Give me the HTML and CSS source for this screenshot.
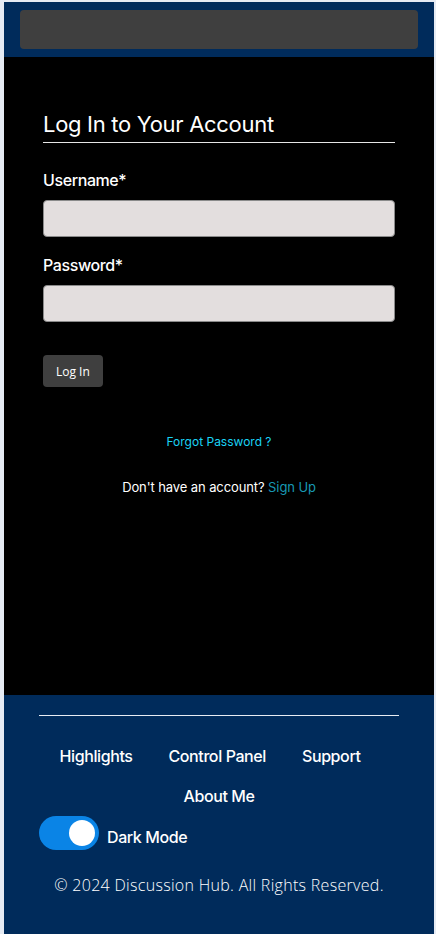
FILE: index.html
```html
<!DOCTYPE html>
<html lang="en">
<head>
<meta charset="utf-8">
<title>Log In - Discussion Hub</title>
<link rel="stylesheet" href="styles.css">
</head>
<body>
<div class="page">
  <header class="topbar">
    <div class="topbar-inner"></div>
  </header>
  <main class="main">
    <form class="login">
      <h1 class="login-title">Log In to Your Account</h1>
      <label class="field-label" for="username">Username*</label>
      <input class="field-input" id="username" type="text">
      <label class="field-label" for="password">Password*</label>
      <input class="field-input" id="password" type="password">
      <div class="actions">
        <button class="btn" type="button">Log In</button>
      </div>
      <p class="forgot"><a href="#">Forgot Password ?</a></p>
      <p class="signup">Don't have an account? <a href="#">Sign Up</a></p>
    </form>
  </main>
  <footer class="footer">
    <hr class="footer-rule">
    <nav class="footer-nav">
      <a href="#">Highlights</a>
      <a href="#">Control Panel</a>
      <a href="#">Support</a>
      <a href="#" class="nav-last">About Me</a>
    </nav>
    <div class="mode">
      <span class="switch"><span class="knob"></span></span>
      <span class="mode-label">Dark Mode</span>
    </div>
    <p class="copy">© 2024 Discussion Hub. All Rights Reserved.</p>
  </footer>
</div>
</body>
</html>
```
FILE: styles.css
```css
* { box-sizing: border-box; }
html, body { margin: 0; padding: 0; }
body {
  background: #e6ebf3;
  font-family: Inter, "Liberation Sans", sans-serif;
  color: #fff;
}
.page {
  margin: 2px 2px 0 4px;
  min-height: 932px;
  display: flex;
  flex-direction: column;
}
.topbar {
  background: #002b5b;
  padding: 8px 16px;
}
.topbar-inner {
  height: 39px;
  background: #3f3f3f;
  border-radius: 4px;
}
.main {
  background: #000;
  height: 638px;
  padding: 52px 39px 0;
}
.login { display: flex; flex-direction: column; }
.login-title {
  margin: 0 0 27px;
  font-size: 22px;
  font-weight: 400;
  letter-spacing: -0.3px;
  line-height: 30px;
  padding-bottom: 3px;
  border-bottom: 1px solid #e6e6e6;
}
.field-label {
  font-size: 16px;
  font-weight: 500;
  letter-spacing: -0.4px;
  line-height: 20px;
  margin-bottom: 10px;
}
.field-input {
  height: 37px;
  background: #e3dede;
  border: 1px solid #8a8a8a;
  border-radius: 4px;
  margin-bottom: 18px;
}
.actions { margin-top: 15px; }
.btn {
  background: #3f3f3f;
  color: #fff;
  border: 0;
  border-radius: 4px;
  height: 32px;
  padding: 0 13px;
  font-family: "Open Sans", Lato, sans-serif;
  font-size: 12px;
}
.forgot {
  margin: 47px 0 0;
  text-align: center;
  font-size: 12px;
}
.forgot a { color: #1ad3f5; text-decoration: none; }
.signup {
  margin: 30px 0 0;
  text-align: center;
  font-size: 13px;
  letter-spacing: -0.1px;
}
.signup a { color: #1898b3; text-decoration: none; }
.footer {
  flex: 1;
  background: #002b5b;
  padding: 20px 35px 30px;
}
.footer-rule {
  margin: 0;
  border: 0;
  border-top: 1px solid #e8ecf3;
}
.footer-nav {
  display: flex;
  flex-wrap: wrap;
  justify-content: center;
  column-gap: 36px;
  row-gap: 20px;
  padding: 30px 18px 0 0;
}
.footer-nav a {
  color: #fff;
  text-decoration: none;
  font-size: 16px;
  font-weight: 500;
  letter-spacing: -0.4px;
  line-height: 20px;
}
.footer-nav .nav-last { margin-left: 18px; }
.mode {
  display: flex;
  align-items: center;
  gap: 8px;
  margin-top: 10px;
}
.switch {
  width: 60px;
  height: 34px;
  border-radius: 17px;
  background: #0a84e6;
  display: flex;
  align-items: center;
  justify-content: flex-end;
  padding: 4px;
}
.knob {
  width: 26px;
  height: 26px;
  border-radius: 50%;
  background: #fff;
}
.mode-label {
  font-size: 16px;
  font-weight: 500;
  letter-spacing: -0.4px;
  margin-top: 7px;
}
.copy {
  margin: 24px 0 0;
  text-align: center;
  font-family: "Open Sans", Lato, sans-serif;
  font-size: 16px;
  font-weight: 300;
  letter-spacing: 0.3px;
}
```
